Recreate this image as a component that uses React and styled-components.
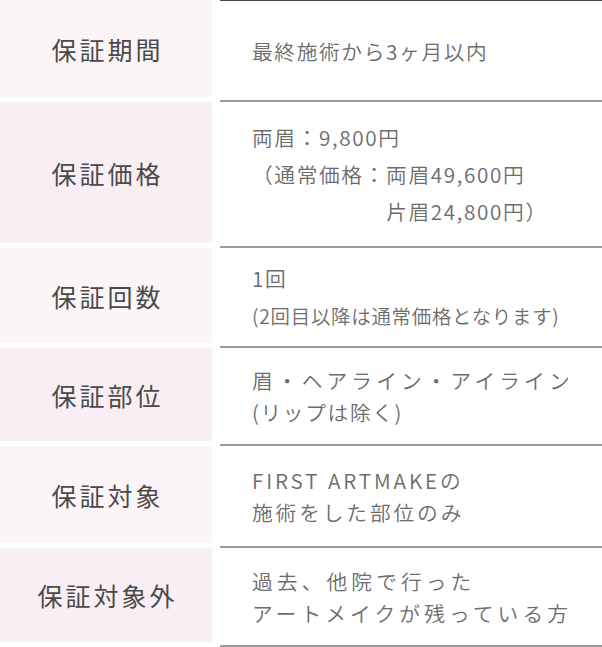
import React from "react";
import styled, { createGlobalStyle } from "styled-components";

const GlobalStyle = createGlobalStyle`
  html, body { margin: 0; padding: 0; background: #ffffff; }
  body {
    font-family: "Noto Sans CJK JP", "Noto Sans", sans-serif;
    -webkit-font-smoothing: antialiased;
  }
`;

const Table = styled.div`
  width: 602px;
  display: flex;
  flex-direction: column;
`;

const Row = styled.div`
  display: grid;
  grid-template-columns: 212px 1fr;
  column-gap: 8px;
`;

const Label = styled.div`
  background: ${(p) => (p.$alt ? "#f9eef4" : "#fcf5f8")};
  margin-bottom: 5px;
  display: flex;
  align-items: center;
  justify-content: center;
  font-size: 25px;
  letter-spacing: 0.12em;
  text-indent: 0.12em;
  color: #4a4a4a;
  font-weight: 400;
`;

const Content = styled.div`
  min-height: ${(p) => p.$min || 97}px;
  box-sizing: border-box;
  padding: 10px 0 10px 32px;
  border-bottom: 2px solid #9c9c9c;
  border-top: ${(p) => (p.$first ? "1px solid #4a4a4a" : "none")};
  display: flex;
  flex-direction: column;
  justify-content: center;
  color: #6c6c6c;
  font-family: "Noto Sans CJK JP DemiLight", "Noto Sans CJK JP Light", "Noto Sans CJK JP", sans-serif;
  font-size: 20.7px;
  font-weight: 300;
  letter-spacing: ${(p) => p.$ls || "0.08em"};
  line-height: ${(p) => p.$lh || 32}px;
`;

const Line = styled.div`
  white-space: nowrap;
  padding-left: ${(p) => p.$indent || 0};
  font-size: ${(p) => p.$size || "inherit"};
  letter-spacing: ${(p) => p.$ls || "inherit"};
`;

export default function App() {
  return (
    <>
      <GlobalStyle />
      <Table>
        <Row>
          <Label>保証期間</Label>
          <Content $first $min={102}>
            <Line>最終施術から3ヶ月以内</Line>
          </Content>
        </Row>
        <Row>
          <Label $alt>保証価格</Label>
          <Content $lh={37} $min={146}>
            <Line>両眉：9,800円</Line>
            <Line>（通常価格：両眉49,600円</Line>
            <Line $indent="6.48em">片眉24,800円）</Line>
          </Content>
        </Row>
        <Row>
          <Label>保証回数</Label>
          <Content $lh={38} $min={100}>
            <Line>1回</Line>
            <Line $size="19.4px" $ls="0.04em">(2回目以降は通常価格となります)</Line>
          </Content>
        </Row>
        <Row>
          <Label $alt>保証部位</Label>
          <Content $ls="0.2em" $min={98}>
            <Line>眉・ヘアライン・アイライン</Line>
            <Line $ls="0.08em">(リップは除く)</Line>
          </Content>
        </Row>
        <Row>
          <Label>保証対象</Label>
          <Content $ls="0.14em" $min={102}>
            <Line>FIRST ARTMAKEの</Line>
            <Line>施術をした部位のみ</Line>
          </Content>
        </Row>
        <Row>
          <Label $alt>保証対象外</Label>
          <Content $ls="0.2em" $min={99}>
            <Line>過去、他院で行った</Line>
            <Line>アートメイクが残っている方</Line>
          </Content>
        </Row>
      </Table>
    </>
  );
}
